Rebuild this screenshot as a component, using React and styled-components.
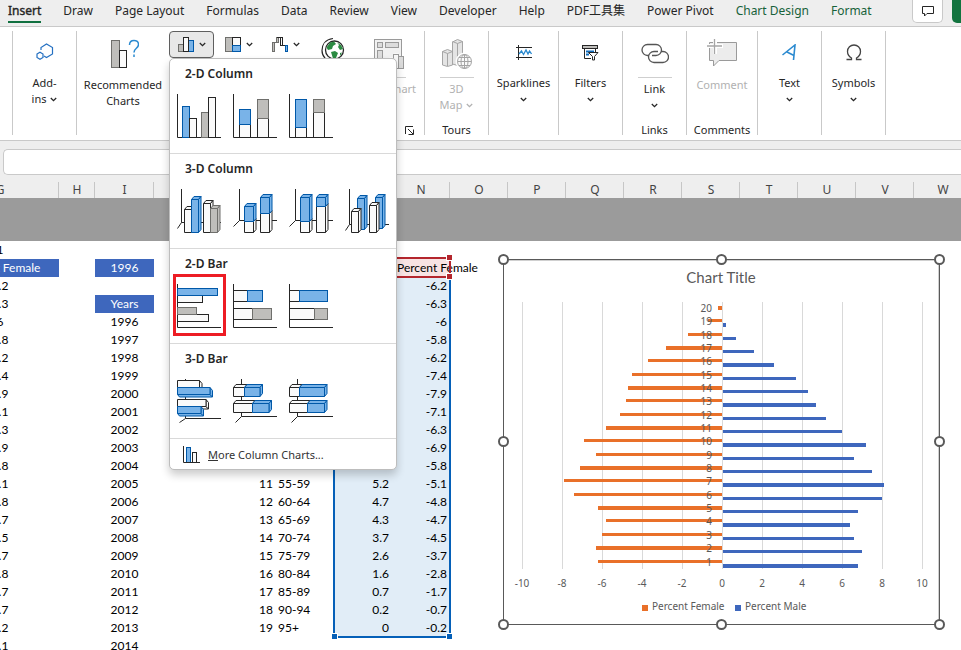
import React from 'react';
import styled, { createGlobalStyle, css } from 'styled-components';

const UI = '"Noto Sans", "Noto Sans CJK SC", sans-serif';
const SHEET = 'Lato, "Noto Sans", sans-serif';
const INK = '#262626';
const BLUE = '#0058a8';
const BLUE_FILL = '#79b3e8';
const GRAY = '#6f6f6c';
const GRAY_FILL = '#bfbebb';
const PAPER = '#fafafa';
const SERIES_F = '#e97029';
const SERIES_M = '#3e67bd';

const Global = createGlobalStyle`
  *, *::before, *::after { box-sizing: border-box; }
  body { margin: 0; font-family: ${UI}; color: ${INK}; }
  button, input { font: inherit; color: inherit; margin: 0; padding: 0; border: 0; background: none; }
  svg { display: block; }
`;

const Window = styled.main`
  display: flex;
  flex-direction: column;
  height: 100vh;
  overflow: hidden;
  background: #fff;
`;

/* Tabs */
const TabBar = styled.nav`
  flex: none;
  display: flex;
  align-items: flex-start;
  height: 27px;
  padding-left: 8px;
  gap: 22px;
  background: #eee;
  border-bottom: 1px solid #c9c9c9;
`;
const Tab = styled.button`
  height: 23px;
  padding-top: 1px;
  font-size: 12px;
  line-height: 20px;
  white-space: nowrap;
  color: ${(p) => (p.$contextual ? '#17623a' : INK)};
  border-bottom: 2px solid ${(p) => (p.$active ? '#107040' : 'transparent')};
  ${(p) => p.$active && css`-webkit-text-stroke: 0.4px ${INK};`}
`;
const TabActions = styled.div`
  display: flex;
  gap: 9px;
  margin-left: auto;
`;
const CommentsButton = styled.button`
  display: grid;
  place-items: center;
  width: 31px;
  height: 23px;
  background: #fff;
  border: 1px solid #c9c9c9;
  border-top: 0;
  border-radius: 0 0 5px 5px;
`;
const ShareButton = styled.button`
  width: 9px;
  height: 23px;
  background: #12743f;
  border-radius: 0 0 0 5px;
`;

/* Ribbon */
const RibbonBar = styled.section`
  flex: none;
  display: flex;
  height: 114px;
  padding: 4px 0 5px 12px;
  background: #fff;
  border-bottom: 1px solid #c9c9c9;
`;
const Group = styled.div`
  display: flex;
  flex-direction: column;
  width: ${(p) => p.$w}px;
  border-right: 1px solid #c9c9c9;
  ${(p) => p.$first && css`border-left: 1px solid #c9c9c9;`}
`;
const GroupBody = styled.div`
  flex: 1;
  display: flex;
  justify-content: ${(p) => (p.$start ? 'flex-start' : 'center')};
`;
const GroupFooter = styled.div`
  display: flex;
  align-items: flex-end;
  justify-content: ${(p) => (p.$end ? 'flex-end' : 'center')};
  height: 10px;
  padding-right: ${(p) => (p.$end ? 10 : 0)}px;
  font-size: 11px;
  line-height: 10px;
`;
const Command = styled.button`
  display: flex;
  flex-direction: column;
  align-items: center;
  align-self: flex-start;
  width: ${(p) => p.$w || 64}px;
  font-size: 11px;
  line-height: 16px;
  color: ${(p) => (p.disabled ? '#b1b1b1' : INK)};
`;
const CommandIcon = styled.span`
  display: grid;
  place-items: center;
  height: ${(p) => p.$h}px;
  margin-bottom: ${(p) => p.$gap}px;
`;
const SplitLine = styled.span`
  width: 34px;
  height: 1px;
  margin-bottom: 3px;
  background: #cfcfcf;
`;
const Line = styled.span`
  display: flex;
  align-items: center;
  justify-content: center;
  gap: 4px;
  height: 16px;
  white-space: nowrap;
`;
const Picker = styled.div`
  position: relative;
  display: flex;
  gap: 2px;
`;
const ChartButton = styled.button`
  display: flex;
  align-items: center;
  justify-content: center;
  gap: 5px;
  width: 45px;
  height: 27px;
  border-radius: 4px;
  border: 1px solid ${(p) => (p.$open ? '#5f5f5f' : 'transparent')};
  background: ${(p) => (p.$open ? '#e8e8e8' : 'transparent')};
`;

/* Gallery */
const Gallery = styled.div`
  position: absolute;
  z-index: 10;
  top: 27px;
  left: 0;
  width: 228px;
  background: #fff;
  border: 1px solid #bdbdbd;
  border-radius: 5px;
  box-shadow: 0 5px 9px rgba(0, 0, 0, 0.2);
`;
const GallerySection = styled.section`
  height: 95px;
  padding: 5px 3px 0;
  border-bottom: 1px solid #d9d9d9;
`;
const GalleryTitle = styled.h2`
  margin: 0 12px;
  height: 20px;
  font-size: 12px;
  line-height: 20px;
  font-weight: 600;
`;
const Tiles = styled.div`
  display: flex;
  gap: 3px;
`;
const Tile = styled.button`
  display: flex;
  justify-content: center;
  width: 53px;
  height: 62px;
  padding-top: 6px;
  border: 3px solid ${(p) => (p.$marked ? '#ed1c24' : 'transparent')};
`;
const MoreButton = styled.button`
  display: flex;
  align-items: center;
  gap: 8px;
  width: 100%;
  height: 30px;
  padding-left: 13px;
  font-size: 11px;
  color: #333;
`;

/* Formula bar */
const FormulaRow = styled.div`
  flex: none;
  height: 37px;
  padding: 8px 0 2px 3px;
  background: #eee;
`;
const FormulaInput = styled.input`
  display: block;
  width: 100%;
  height: 26px;
  background: #fff;
  border: 1px solid #c9c9c9;
  border-right: 0;
  border-radius: 5px 0 0 5px;
`;

/* Sheet */
const SheetView = styled.div`
  flex: 1;
  min-height: 0;
  position: relative;
  overflow: hidden;
`;
const Table = styled.table`
  width: calc(100% + 70px);
  margin-left: -59px;
  table-layout: fixed;
  border-spacing: 0;
  font-family: ${SHEET};
  font-size: 12px;
  line-height: 18px;
  color: #000;
`;
const Col = styled.col`
  width: ${(p) => (p.$w ? `${p.$w}px` : 'auto')};
`;
const ColHead = styled.th`
  height: 20px;
  padding: 3px 0 0;
  font: 400 12px/17px ${UI};
  color: #444;
  background: linear-gradient(#c6c6c6, #c6c6c6) right bottom / 1px 16px no-repeat #eee;
`;
const Frozen = styled.td`
  height: 43px;
  padding: 0;
  background: #9b9b9b;
`;
const Cell = styled.td`
  height: 18px;
  padding: 0 ${(p) => p.$pr || 0}px 0 ${(p) => p.$pl || 0}px;
  text-align: ${(p) => p.$align || 'center'};
  white-space: nowrap;
  background: ${(p) => p.$fill || 'transparent'};
  color: ${(p) => (p.$inverse ? '#fff' : '#000')};
`;
const RangeFrame = styled.div`
  position: absolute;
  top: ${(p) => p.$top}px;
  left: ${(p) => p.$left}px;
  width: ${(p) => p.$w}px;
  height: ${(p) => p.$h}px;
  border: 2px solid ${(p) => p.$color};
  border-top-width: ${(p) => (p.$openTop ? 0 : 2)}px;
  pointer-events: none;
`;
const RangeHandle = styled.i`
  position: absolute;
  width: 7px;
  height: 7px;
  border: 1px solid #fff;
  background: ${(p) => p.$color};
  ${(p) => (p.$v === 'top' ? 'top: -5px;' : 'bottom: -4px;')}
  ${(p) => (p.$hz === 'left' ? 'left: -4px;' : 'right: -4px;')}
`;
const ChartObject = styled.figure`
  position: absolute;
  top: 81px;
  left: 503px;
  margin: 0;
  width: 437px;
  svg { overflow: visible; }
`;

/* Icons */
const Chevron = () => (
  <svg width="7" height="5" viewBox="0 0 7 5" fill="none" stroke="currentColor" strokeWidth="1.3">
    <path d="M.8 1 3.5 3.6 6.2 1" />
  </svg>
);

const PAINT = {
  b: { fill: BLUE_FILL, stroke: BLUE },
  g: { fill: GRAY_FILL, stroke: GRAY },
  w: { fill: PAPER, stroke: INK },
};

const Flat = ({ c, b: [x1, y1, x2, y2] }) => (
  <rect x={x1} y={y1} width={x2 - x1} height={y2 - y1} {...PAINT[c]} />
);
/* A box whose top and right faces recede up and to the right. */
const Box = ({ c, b: [x1, y1, x2, y2], side = true, top = true }) => (
  <g {...PAINT[c]} strokeLinejoin="round">
    {top && <path d={`M${x1} ${y1}l2.5-3H${x2 + 2.5}L${x2} ${y1}z`} />}
    {side && <path d={`M${x2} ${y1}l2.5-3V${y2 - 3}L${x2} ${y2}z`} />}
    <rect x={x1} y={y1} width={x2 - x1} height={y2 - y1} />
  </g>
);
/* A box whose right face is turned down. */
const Slab = ({ c, b: [x1, y1, x2, y2] }) => (
  <g {...PAINT[c]} strokeLinejoin="round">
    <path d={`M${x1} ${y2}l2 2.5H${x2 + 2.5}L${x2} ${y2}z`} />
    <path d={`M${x2} ${y1}l2.5 3V${y2 + 2.5}L${x2} ${y2}z`} />
    <rect x={x1} y={y1} width={x2 - x1} height={y2 - y1} />
  </g>
);
const Axis = ({ d = 'M1.5 1V44.5H45' }) => <path d={d} fill="none" stroke={INK} />;
const F = (c, ...b) => <Flat key={b.join()} c={c} b={b} />;
const B = (c, ...b) => <Box key={b.join()} c={c} b={b} />;
const Bt = (c, ...b) => <Box key={b.join()} c={c} b={b} top={false} />;
const Bs = (c, ...b) => <Box key={b.join()} c={c} b={b} side={false} />;
const S = (c, ...b) => <Slab key={b.join()} c={c} b={b} />;

const AX_COL = 'M7.5 1V32.5H45M7.5 32.5 1.5 38.5';
const AX_BAR = 'M9.5 1V38.5H45M9.5 38.5 3.5 44.5';

const GALLERY = [
  {
    title: '2-D Column',
    tiles: [
      ['Clustered Column', undefined, [F('b', 6.5, 13.5, 13.5, 44.5), F('w', 13.5, 25.5, 20.5, 44.5), F('g', 25.5, 19.5, 32.5, 44.5), F('w', 32.5, 4.5, 39.5, 44.5)]],
      ['Stacked Column', undefined, [F('w', 7.5, 31.5, 18.5, 44.5), F('b', 7.5, 16.5, 18.5, 31.5), F('w', 25.5, 25.5, 36.5, 44.5), F('g', 25.5, 6.5, 36.5, 25.5)]],
      ['100% Stacked Column', undefined, [F('w', 7.5, 34.5, 18.5, 44.5), F('b', 7.5, 6.5, 18.5, 34.5), F('w', 25.5, 19.5, 36.5, 44.5), F('g', 25.5, 6.5, 36.5, 19.5)]],
    ],
  },
  {
    title: '3-D Column',
    tiles: [
      ['3-D Clustered Column', 'M5.5 1V34.5H45M5.5 34.5 1.5 40.5', [B('w', 8.5, 21.5, 15.5, 44.5), B('b', 15.5, 11.5, 22.5, 44.5), B('w', 27.5, 15.5, 34.5, 44.5), B('g', 34.5, 20.5, 41.5, 44.5)]],
      ['3-D Stacked Column', AX_COL, [Bt('w', 12.5, 33.5, 21.5, 44.5), B('b', 12.5, 18.5, 21.5, 33.5), Bt('w', 28.5, 25.5, 37.5, 44.5), B('b', 28.5, 9.5, 37.5, 25.5)]],
      ['3-D 100% Stacked Column', AX_COL, [Bt('w', 12.5, 33.5, 21.5, 44.5), B('b', 12.5, 9.5, 21.5, 33.5), Bt('w', 28.5, 18.5, 37.5, 44.5), B('b', 28.5, 9.5, 37.5, 18.5)]],
      ['3-D Column', 'M5.5 1V36.5H45M5.5 36.5 1.5 42.5', [B('b', 13.5, 10.5, 20.5, 41.5), B('w', 7.5, 23.5, 14.5, 44.5), B('b', 31.5, 9.5, 38.5, 40.5), B('w', 25.5, 17.5, 32.5, 44.5)]],
    ],
  },
  {
    title: '2-D Bar',
    marked: 0,
    tiles: [
      ['Clustered Bar', undefined, [F('w', 1.5, 12.5, 26.5, 19.5), F('b', 1.5, 5.5, 41.5, 12.5), F('w', 1.5, 31.5, 32.5, 38.5), F('g', 1.5, 24.5, 20.5, 31.5)]],
      ['Stacked Bar', undefined, [F('w', 1.5, 7.5, 15.5, 18.5), F('b', 15.5, 7.5, 30.5, 18.5), F('w', 1.5, 25.5, 20.5, 36.5), F('g', 20.5, 25.5, 39.5, 36.5)]],
      ['100% Stacked Bar', undefined, [F('w', 1.5, 7.5, 11.5, 18.5), F('b', 11.5, 7.5, 39.5, 18.5), F('w', 1.5, 25.5, 26.5, 36.5), F('g', 26.5, 25.5, 39.5, 36.5)]],
    ],
  },
  {
    title: '3-D Bar',
    tiles: [
      ['3-D Clustered Bar', 'M9.5 1V40.5H45M9.5 40.5 3.5 44.5', [S('w', 1.5, 2.5, 23.5, 9.5), S('b', 1.5, 9.5, 34, 16.5), S('w', 1.5, 21.5, 30, 28.5), S('b', 1.5, 28.5, 25, 35.5)]],
      ['3-D Stacked Bar', AX_BAR, [Bs('w', 1.5, 9.5, 12.5, 18.5), B('b', 12.5, 9.5, 28, 18.5), Bs('w', 1.5, 25.5, 20.5, 34.5), B('b', 20.5, 25.5, 37, 34.5)]],
      ['3-D 100% Stacked Bar', AX_BAR, [Bs('w', 1.5, 9.5, 11.5, 18.5), B('b', 11.5, 9.5, 36.5, 18.5), Bs('w', 1.5, 25.5, 19.5, 34.5), B('b', 19.5, 25.5, 36.5, 34.5)]],
    ],
  },
];

const AddInsIcon = () => (
  <svg width="18" height="18" viewBox="0 0 18 18" fill="none" stroke="#2470c2" strokeWidth="1.2">
    <path d="M5 7V4.5L10.5 1 16.500 4.500V11L10.500 14.500 8 13" />
    <path d="M1 11 4 9.200 7 11V14.500L4 16.200 1 14.500z" />
  </svg>
);
const RecommendedIcon = () => (
  <svg width="32" height="29" viewBox="-4 0 32 29" fill="none">
    <rect x=".5" y="1.500" width="8" height="27" fill={GRAY_FILL} stroke={GRAY} />
    <rect x="8.500" y="11.500" width="7" height="17" fill={PAPER} stroke={INK} />
    <path d="M18.500 6C18.500 3 20.500 1.500 23 1.500S27.500 3 27.500 5.500C27.500 9.500 23 9 23 13.500M23 15.500V18" stroke="#2b8ad0" strokeWidth="1.500" />
  </svg>
);
const ColumnIcon = () => (
  <svg width="16" height="17" viewBox="0 0 16 17">
    <rect x=".5" y="8.500" width="5" height="7" fill={GRAY_FILL} stroke={GRAY} />
    <rect x="10.500" y="4.500" width="5" height="11" {...PAINT.b} />
    <rect x="5.500" y="1.500" width="5" height="14" {...PAINT.w} />
  </svg>
);
const HierarchyIcon = () => (
  <svg width="16" height="17" viewBox="0 0 16 17">
    <rect x=".5" y="1.500" width="7" height="14" {...PAINT.g} />
    <rect x="7.500" y="1.500" width="8" height="8" {...PAINT.w} />
    <rect x="7.500" y="9.500" width="8" height="6" {...PAINT.b} />
  </svg>
);
const WaterfallIcon = () => (
  <svg width="16" height="17" viewBox="0 0 16 17">
    <rect x=".5" y="6.500" width="2" height="9" {...PAINT.g} />
    <path d="M1 6.500H4.500" stroke={GRAY} />
    <rect x="4.500" y="1.500" width="2" height="5" {...PAINT.g} />
    <path d="M5 1.500H10" stroke={INK} />
    <rect x="8.500" y="1.500" width="2" height="8" {...PAINT.w} />
    <path d="M10 9.500H14" stroke={INK} />
    <rect x="13.500" y="9.500" width="2" height="6" {...PAINT.b} />
  </svg>
);
const GlobeIcon = () => (
  <svg width="24" height="28" viewBox="0 0 24 28" fill="none">
    <circle cx="13.500" cy="13" r="9" fill="#fff" stroke={INK} strokeWidth="1.300" />
    <path d="M12 1.500C4 2.500 1 8 1 13.500S5 24.500 13 25" stroke={INK} strokeWidth="1.200" />
    <path d="M9 5.500 13 4.500 15 7 12 9 11 12 7 13 5.500 10.500zM16 5.500 20 8 22 12 19 13 17 10 18 8zM10 15 14 14 17 16 15 21 12 21.500zM19 16 21 15.500 19 19z" fill="#2b8a42" />
  </svg>
);
const PivotIcon = () => (
  <svg width="30" height="31" viewBox="0 0 30 31" fill="#dcdcdc" stroke="#9a9a9a">
    <rect x=".5" y=".5" width="27" height="27" fill="#f1f1f1" />
    <rect x="3.500" y="3.500" width="5" height="5" />
    <rect x="11.500" y="3.500" width="13" height="5" />
    <rect x="3.500" y="11.500" width="5" height="13" />
    <path d="M15.500 29.500V18.500H19.500V14.500H24.500V17.500H29.500V29.500z" fill="#fff" stroke="none" />
    <rect x="15.500" y="19.500" width="4" height="10" />
    <rect x="19.500" y="15.500" width="5" height="14" fill="#f8f8f8" />
    <rect x="24.500" y="17.500" width="5" height="12" />
  </svg>
);
const MapIcon = () => (
  <svg width="30" height="31" viewBox="0 0 30 31" fill="#e4e4e4" stroke="#a5a5a5">
    <path d="M.5 12.500 5.500 10.500 10.500 12.500V26L5.500 27.500.5 26z" />
    <path d="M10.500 3 15.500.5 20.500 2.500V25L15.500 26.500 10.500 25z" />
    <path d="M15.500 4.500V26M15.500 4.500 20.500 2.500M15.500 4.500 10.500 2.500M5.500 14.500V27M5.500 14.500.5 12.500M5.500 14.500 10.500 12.500" fill="none" />
    <circle cx="22.500" cy="22.500" r="8.500" fill="#fff" stroke="#fff" />
    <circle cx="22.500" cy="22.500" r="7" fill="#fafafa" />
    <path d="M22.500 15.500V29.500M15.500 22.500H29.500M17 18.500H28M17 26.500H28" fill="none" />
    <ellipse cx="22.500" cy="22.500" rx="3.500" ry="7" fill="none" />
  </svg>
);
const SparkIcon = () => (
  <svg width="16" height="15" viewBox="0 0 16 15" fill="none">
    <path d="M0 2.500H16M0 12.500H16M2.500 0V15" stroke={INK} />
    <path d="M3 9 5.500 6 7.500 9.500 10 5 12 9 13.500 6 15.500 9" stroke="#2b8ad0" strokeWidth="1.300" />
  </svg>
);
const FilterIcon = () => (
  <svg width="17" height="17" viewBox="0 0 17 17" fill="none">
    <rect x=".5" y="1.500" width="15" height="3" fill={GRAY_FILL} stroke={INK} />
    <path d="M2.500 4.500V14.500H9M13.500 4.500V8" stroke={INK} />
    <path d="M4 7.500H12M4 10.500H7" stroke="#0f6cbd" strokeWidth="2" />
    <path d="M6.500 8.500H16L12.500 12.500V16H10.500V12.500z" fill="#fff" stroke={INK} />
  </svg>
);
const LinkIcon = () => (
  <svg width="28" height="22" viewBox="0 0 28 22" fill="none" stroke="#555" strokeWidth="1.300">
    <path d="M8 12.500H6.500A5.500 5.500 0 0 1 6.500 1.500H15A5.500 5.500 0 0 1 15 12.500H11" />
    <path d="M20 8.500H22A5.500 5.500 0 0 1 22 19.500H13A5.500 5.500 0 0 1 13 8.500H17" />
  </svg>
);
const AddCommentIcon = () => (
  <svg width="30" height="30" viewBox="0 0 30 30" fill="none">
    <path d="M2.500 4.500H29.500V22.500H12L6.500 28V22.500H2.500z" fill="#ececec" stroke="#9a9a9a" />
    <path d="M8 0V16M0 8H16" stroke="#fff" strokeWidth="4" />
    <path d="M7.500 1V16M0 8H15" stroke="#a6a6a6" strokeWidth="1.300" />
  </svg>
);
const TextIcon = () => (
  <svg width="15" height="17" viewBox="0 0 15 17" fill="none" stroke="#2b8ad0" strokeWidth="1.600">
    <path d="M.5 11 13 1 11.500 16M5 8 12 11.500" />
  </svg>
);
const OmegaIcon = () => (
  <svg width="16" height="17" viewBox="0 0 16 17" fill="none" stroke="#444" strokeWidth="1.300">
    <path d="M.5 15.500H5.500V14C3 12.500 1.500 10.500 1.500 7.500 1.500 3.500 4.500 1 8 1S14.500 3.500 14.500 7.500C14.500 10.500 13 12.500 10.500 14V15.500H15.500" />
  </svg>
);
const BubbleIcon = () => (
  <svg width="12" height="11" viewBox="0 0 12 11" fill="none" stroke={INK}>
    <path d="M.5 .5H11.500V7.500H5L2.500 10V7.500H.5z" />
  </svg>
);
const LauncherIcon = () => (
  <svg width="9" height="9" viewBox="0 0 9 9" fill="none" stroke={INK}>
    <path d="M.5 8V.5H8M3 3 8 8M8.500 3.500V8.500H3.500" />
  </svg>
);
const MoreIcon = () => (
  <svg width="17" height="17" viewBox="0 0 17 17">
    <rect x="3.500" y="1.500" width="4" height="15" {...PAINT.b} />
    <rect x="9.500" y="6.500" width="4" height="10" {...PAINT.w} />
    <path d="M.5 0V16.500H17" fill="none" stroke={INK} />
  </svg>
);

const Simple = ({ icon, label, second, w }) => (
  <Command $w={w}>
    <CommandIcon $h={42} $gap={2}>{icon}</CommandIcon>
    <Line>{label}</Line>
    <Line>{second}<Chevron /></Line>
  </Command>
);
const Split = ({ icon, label, second, disabled, chevron = true, w }) => (
  <Command disabled={disabled} $w={w}>
    <CommandIcon $h={46} $gap={0}>{icon}</CommandIcon>
    <SplitLine />
    <Line>{label}</Line>
    {chevron && <Line>{second}<Chevron /></Line>}
  </Command>
);

const TABS = ['Insert', 'Draw', 'Page Layout', 'Formulas', 'Data', 'Review', 'View', 'Developer', 'Help', 'PDF工具集', 'Power Pivot', 'Chart Design', 'Format'];

const ChartGallery = () => (
  <Gallery>
    {GALLERY.map((s) => (
      <GallerySection key={s.title}>
        <GalleryTitle>{s.title}</GalleryTitle>
        <Tiles>
          {s.tiles.map(([name, axis, shapes], i) => (
            <Tile key={name} aria-label={name} $marked={s.marked === i}>
              <svg width="47" height="47" viewBox="0 0 47 47">
                <Axis d={axis} />
                {shapes}
              </svg>
            </Tile>
          ))}
        </Tiles>
      </GallerySection>
    ))}
    <MoreButton>
      <MoreIcon />
      <span><u>M</u>ore Column Charts...</span>
    </MoreButton>
  </Gallery>
);

const Ribbon = () => (
  <RibbonBar>
    <Group $w={65} $first>
      <GroupBody><Simple icon={<AddInsIcon />} label="Add-" second="ins" /></GroupBody>
    </Group>
    <Group $w={348}>
      <GroupBody $start>
        <Command $w={92}>
          <CommandIcon $h={44} $gap={2}><RecommendedIcon /></CommandIcon>
          <Line>Recommended</Line>
          <Line>Charts</Line>
        </Command>
        <Picker>
          <ChartButton $open aria-label="Column or bar chart"><ColumnIcon /><Chevron /></ChartButton>
          <ChartButton aria-label="Hierarchy chart"><HierarchyIcon /><Chevron /></ChartButton>
          <ChartButton aria-label="Waterfall chart"><WaterfallIcon /><Chevron /></ChartButton>
          <ChartGallery />
        </Picker>
        <Command $w={50} aria-label="Maps">
          <CommandIcon $h={40} $gap={0}><GlobeIcon /></CommandIcon>
        </Command>
        <Split w={62} disabled chevron={false} icon={<PivotIcon />} label="PivotChart" />
      </GroupBody>
      <GroupFooter $end><LauncherIcon /></GroupFooter>
    </Group>
    <Group $w={64}>
      <GroupBody><Split disabled icon={<MapIcon />} label="3D" second="Map" /></GroupBody>
      <GroupFooter>Tours</GroupFooter>
    </Group>
    <Group $w={70}>
      <GroupBody><Simple icon={<SparkIcon />} label="Sparklines" /></GroupBody>
    </Group>
    <Group $w={64}>
      <GroupBody><Simple icon={<FilterIcon />} label="Filters" /></GroupBody>
    </Group>
    <Group $w={64}>
      <GroupBody><Split icon={<LinkIcon />} label="Link" /></GroupBody>
      <GroupFooter>Links</GroupFooter>
    </Group>
    <Group $w={71}>
      <GroupBody>
        <Command disabled>
          <CommandIcon $h={44} $gap={2}><AddCommentIcon /></CommandIcon>
          <Line>Comment</Line>
        </Command>
      </GroupBody>
      <GroupFooter>Comments</GroupFooter>
    </Group>
    <Group $w={64}>
      <GroupBody><Simple icon={<TextIcon />} label="Text" /></GroupBody>
    </Group>
    <Group $w={64}>
      <GroupBody><Simple icon={<OmegaIcon />} label="Symbols" /></GroupBody>
    </Group>
  </RibbonBar>
);

const FEMALE = [6.2, 6.3, 6, 5.8, 6.2, 7.4, 7.9, 7.1, 6.3, 6.9, 5.8, 5.1, 4.8, 4.7, 4.5, 3.7, 2.8, 1.7, 0.7, 0.2];
const MALE = [6.8, 7, 6.6, 6.4, 6.8, 8, 8.1, 7.5, 6.6, 7.2, 6, 5.2, 4.7, 4.3, 3.7, 2.6, 1.6, 0.7, 0.2, 0];
const AGES = { 11: '55-59', 12: '60-64', 13: '65-69', 14: '70-74', 15: '75-79', 16: '80-84', 17: '85-89', 18: '90-94', 19: '95+' };
const COLUMNS = [
  ['G', 118], ['H', 36], ['I', 59], ['', 64], ['', 58], ['', 58], ['', 58], ['N', 58],
  ['O', 58], ['P', 58], ['Q', 58], ['R', 58], ['S', 58], ['T', 58], ['U', 58], ['V', 58], ['W', 0],
];
const RANGE_FILL = '#e1edf7';

const DataRow = ({ i }) => {
  const inRange = i >= 0 && i < FEMALE.length;
  const fill = inRange ? RANGE_FILL : undefined;
  const age = AGES[i];
  return (
    <tr>
      <Cell>{inRange ? FEMALE[i] : '7.1'}</Cell>
      <Cell />
      {i === 1 && <Cell $fill={SERIES_M} $inverse>Years</Cell>}
      {i !== 1 && <Cell>{i > 1 ? 1994 + i : ''}</Cell>}
      <Cell />
      <Cell $align="right" $pr={3}>{age && i}</Cell>
      <Cell $align="left" $pl={2}>{age}</Cell>
      <Cell $align="right" $pr={3} $fill={fill}>{age && MALE[i]}</Cell>
      <Cell $align="right" $pr={3} $fill={fill}>{inRange && -FEMALE[i]}</Cell>
      <Cell colSpan={9} />
    </tr>
  );
};

const Sheet = () => (
  <Table>
    <colgroup>{COLUMNS.map(([n, w], i) => <Col key={i} $w={w} />)}</colgroup>
    <thead>
      <tr>{COLUMNS.map(([n], i) => <ColHead key={i}>{n}</ColHead>)}</tr>
    </thead>
    <tbody>
      <tr><Frozen colSpan={17} /></tr>
      <tr><Cell>1</Cell><Cell colSpan={16} /></tr>
      <tr>
        <Cell $fill={SERIES_M} $inverse>Percent Female</Cell>
        <Cell />
        <Cell $fill={SERIES_M} $inverse>1996</Cell>
        <Cell colSpan={4} />
        <Cell $align="left" $pl={5} $fill="#f8e3e3">Percent Female</Cell>
        <Cell colSpan={9} />
      </tr>
      {Array.from({ length: 21 }, (_, i) => <DataRow key={i} i={i} />)}
    </tbody>
  </Table>
);

const UNIT = 20;
const ZERO = 219;
const PITCH = 13.35;
const centerOf = (i) => 302.5 - i * PITCH;

const ChartText = styled.text`
  font-family: ${(p) => (p.$title ? SHEET : UI)};
  font-size: ${(p) => (p.$title ? 15 : 10)}px;
  fill: #595959;
`;

const PyramidChart = () => (
  <ChartObject>
    <svg width="437" height="366" viewBox="0 0 437 366" role="img" aria-label="Population pyramid">
      <rect x=".5" y=".5" width="436" height="365" fill="#fff" stroke="#595959" />
      <path d="M1 1.500H436M435.500 1V365" stroke="#d0d0d0" fill="none" />
      <ChartText $title x="218" y="24" textAnchor="middle">Chart Title</ChartText>
      {Array.from({ length: 11 }, (_, k) => (k - 5) * 2).map((v) => (
        <g key={v}>
          <path d={`M${ZERO + 0.5 + v * UNIT} 43V310`} stroke="#d9d9d9" />
          <ChartText x={ZERO + v * UNIT} y="328" textAnchor="middle">{v}</ChartText>
        </g>
      ))}
      {FEMALE.map((v, i) => (
        <rect key={i} x={ZERO - Math.round(v * UNIT)} y={Math.round(centerOf(i) - 2)} width={Math.round(v * UNIT)} height={i % 3 === 1 ? 4 : 3} fill={SERIES_F} />
      ))}
      {MALE.map((v, i) => (
        <rect key={i} x={ZERO + 1} y={Math.round(centerOf(i) + 2)} width={Math.max(0, Math.round(v * UNIT) - 1)} height={i % 3 === 0 ? 4 : 3} fill={SERIES_M} />
      ))}
      {FEMALE.map((v, i) => (
        <ChartText key={i} x="209" y={Math.round(centerOf(i)) + 4} textAnchor="end">{i + 1}</ChartText>
      ))}
      <rect x="139" y="346" width="6" height="6" fill={SERIES_F} />
      <ChartText x="149" y="351">Percent Female</ChartText>
      <rect x="232" y="346" width="6" height="6" fill={SERIES_M} />
      <ChartText x="242" y="351">Percent Male</ChartText>
      {[[0, 0], [218, 0], [436, 0], [0, 182], [436, 182], [0, 365], [218, 365], [436, 365]].map(([x, y]) => (
        <circle key={`${x}-${y}`} cx={x + 0.5} cy={y + 0.5} r="4.500" fill="#fff" stroke="#595959" strokeWidth="2" />
      ))}
    </svg>
  </ChartObject>
);

export default function App() {
  return (
    <Window>
      <Global />
      <TabBar>
        {TABS.map((t, i) => <Tab key={t} $active={i === 0} $contextual={i > 10}>{t}</Tab>)}
        <TabActions>
          <CommentsButton aria-label="Comments"><BubbleIcon /></CommentsButton>
          <ShareButton aria-label="Share" />
        </TabActions>
      </TabBar>
      <Ribbon />
      <FormulaRow><FormulaInput aria-label="Formula bar" /></FormulaRow>
      <SheetView>
        <Sheet />
        <RangeFrame $top={99} $left={333} $w={118} $h={361} $color="#0560b8" $openTop>
          <RangeHandle $color="#0560b8" $v="bottom" $hz="left" />
          <RangeHandle $color="#0560b8" $v="bottom" $hz="right" />
        </RangeFrame>
        <RangeFrame $top={79} $left={391} $w={60} $h={21} $color="#b4262d">
          <RangeHandle $color="#b4262d" $v="top" $hz="right" />
          <RangeHandle $color="#b4262d" $v="bottom" $hz="right" />
        </RangeFrame>
        <PyramidChart />
      </SheetView>
    </Window>
  );
}
